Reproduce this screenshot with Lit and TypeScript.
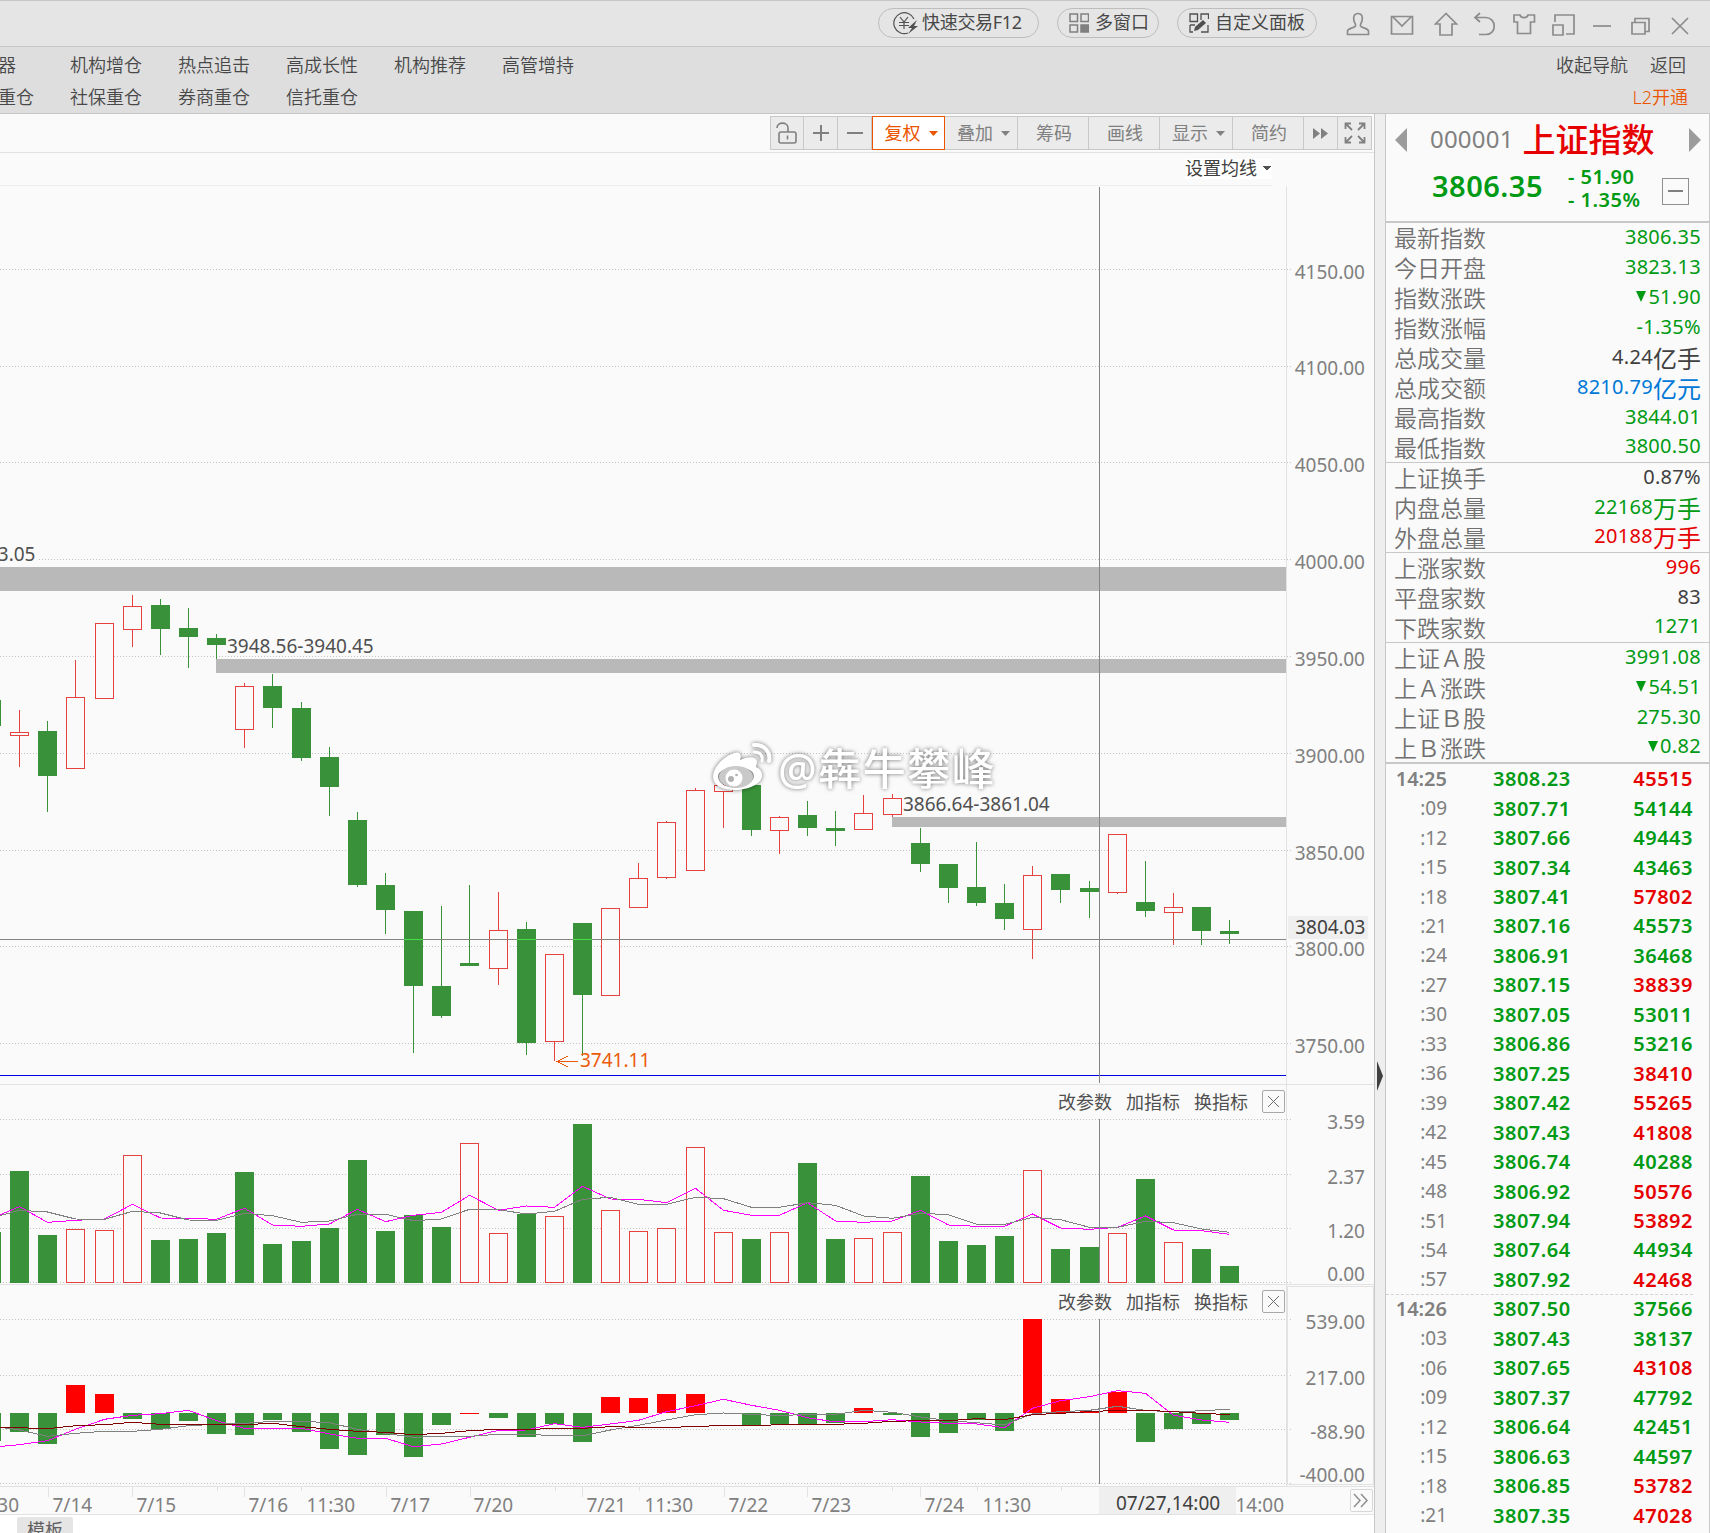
import { html, svg, css, LitElement } from 'lit'
import { customElement } from 'lit/decorators.js'
import { classMap } from 'lit/directives/class-map.js'

const SANS = css`"Noto Sans", "Noto Sans CJK SC", sans-serif`

type Tone = 'up' | 'down' | 'flat' | 'link'

// [tone, high, body top, body bottom, low]
const CANDLES: [string, number, number, number, number][] = [
  ['g', 700, 700, 726, 726],
  ['r', 710, 732, 736, 767],
  ['g', 721, 731, 776, 812],
  ['r', 660, 697, 769, 769],
  ['r', 623, 623, 699, 699],
  ['r', 595, 606, 630, 647],
  ['g', 599, 605, 629, 655],
  ['g', 608, 628, 637, 668],
  ['g', 634, 638, 645, 659],
  ['r', 683, 686, 730, 748],
  ['g', 674, 686, 708, 728],
  ['g', 702, 708, 758, 761],
  ['g', 747, 757, 787, 816],
  ['g', 812, 820, 885, 887],
  ['g', 873, 885, 910, 934],
  ['g', 911, 911, 986, 1053],
  ['g', 906, 986, 1016, 1018],
  ['g', 885, 963, 966, 966],
  ['r', 892, 930, 969, 985],
  ['g', 922, 929, 1043, 1055],
  ['r', 954, 954, 1042, 1061],
  ['g', 923, 923, 995, 1056],
  ['r', 908, 908, 996, 996],
  ['r', 863, 878, 908, 908],
  ['r', 821, 822, 878, 879],
  ['r', 788, 790, 871, 871],
  ['r', 783, 785, 792, 828],
  ['g', 785, 785, 830, 836],
  ['r', 816, 817, 831, 854],
  ['g', 801, 815, 828, 836],
  ['g', 811, 828, 831, 846],
  ['r', 795, 813, 830, 830],
  ['r', 794, 798, 815, 817],
  ['g', 828, 843, 864, 872],
  ['g', 864, 864, 888, 903],
  ['g', 842, 887, 903, 906],
  ['g', 884, 903, 919, 930],
  ['r', 866, 875, 930, 959],
  ['g', 874, 874, 890, 903],
  ['g', 881, 888, 892, 918],
  ['r', 834, 834, 893, 894],
  ['g', 861, 902, 911, 917],
  ['r', 893, 907, 913, 945],
  ['g', 907, 907, 931, 945],
  ['g', 920, 931, 934, 944]
]

const VOLUME_TONES = 'gggrrrggggggggggg' + 'rrgrgrrrrrgrggrrggggrggrgrgg'
const VOLUMES = [
  1232, 1171, 1235, 1229, 1230, 1155, 1240, 1239, 1233, 1172, 1244, 1241, 1228, 1160, 1231, 1215,
  1227, 1143, 1233, 1214, 1216, 1124, 1210, 1231, 1228, 1147, 1232, 1239, 1232, 1163, 1239, 1238,
  1232, 1176, 1241, 1245, 1236, 1170, 1249, 1247, 1233, 1179, 1242, 1249, 1266
]
const VOLUME_FAST = [
  445, 410, 457, 451, 447, 403, 444, 445, 448, 415, 465, 469, 462, 418, 455, 436, 427, 376, 421,
  408, 412, 349, 387, 388, 398, 355, 421, 436, 436, 398, 453, 457, 453, 421, 465, 469, 469, 432,
  474, 478, 472, 438, 480, 482, 493
]
const VOLUME_SLOW = [
  444, 421, 426, 447, 448, 424, 429, 450, 451, 430, 437, 457, 453, 433, 433, 452, 447, 418, 419,
  432, 424, 388, 382, 403, 403, 382, 386, 412, 412, 398, 406, 438, 445, 430, 434, 463, 463, 442,
  449, 472, 472, 454, 458, 477, 487
]

const FLOW_ZERO = 1413
const FLOWS = [
  1441, 1432, 1444, 1385, 1394, 1419, 1429, 1421, 1434, 1435, 1420, 1432, 1449, 1455, 1435, 1457,
  1425, 1412, 1418, 1437, 1424, 1442, 1397, 1398, 1394, 1394, 1413, 1425, 1424, 1424, 1423, 1408,
  1415, 1437, 1433, 1420, 1431, 1319, 1399, 1411, 1392, 1442, 1429, 1424, 1420
]
const FLOW_FAST = [
  1132, 1124, 1112, 1078, 1048, 1036, 1031, 1021, 1052, 1075, 1075, 1075, 1092, 1105, 1105, 1130,
  1122, 1102, 1081, 1080, 1061, 1072, 1062, 1051, 1025, 1007, 988, 1006, 1021, 1043, 1056, 1055,
  1049, 1056, 1060, 1062, 1073, 1015, 992, 980, 962, 970, 1036, 1050, 1057
]
const FLOW_MID = [
  1068, 1080, 1099, 1090, 1084, 1084, 1078, 1067, 1063, 1060, 1054, 1054, 1058, 1078, 1090, 1102,
  1099, 1099, 1093, 1093, 1097, 1097, 1080, 1066, 1050, 1034, 1029, 1033, 1037, 1033, 1033, 1021,
  1027, 1041, 1052, 1058, 1065, 1031, 1025, 1021, 1009, 1021, 1026, 1022, 1018
]
const FLOW_SLOW = [
  1072, 1073, 1076, 1067, 1064, 1057, 1063, 1064, 1064, 1064, 1060, 1070, 1078, 1084, 1087, 1094,
  1090, 1082, 1078, 1079, 1075, 1075, 1070, 1072, 1073, 1069, 1067, 1067, 1064, 1063, 1063, 1060,
  1054, 1052, 1052, 1046, 1049, 1034, 1030, 1025, 1021, 1021, 1025, 1030, 1034
]

// the series start one bar left of the visible area
const barX = (index: number) => {
  const i = index - 1
  return 19 + 28 * i + Math.floor((i + 4) / 7)
}
const points = (series: number[]) =>
  series.map((v, i) => `${barX(i) + 0.5},${(1070 + v / 3).toFixed(1)}`).join(' ')

const hollow = (x: number, top: number, bottom: number) =>
  svg`<rect class="hollow" x=${x - 8.5} y=${top + 0.5} width="18" height=${Math.max(bottom - top - 1, 1)} />`
const solid = (x: number, top: number, bottom: number, tone = 'solid') =>
  svg`<rect class=${tone} x=${x - 9} y=${top} width="19" height=${bottom - top} />`
const grid = (ys: number[]) =>
  ys.map((y) => svg`<line class="grid" x1="0" x2="1291" y1=${y + 0.5} y2=${y + 0.5} />`)
const scale = (labels: [number, string][]) =>
  labels.map(([y, text]) => svg`<text class="scale" x="1365" y=${y}>${text}</text>`)

@customElement('kline-chart')
export class KlineChart extends LitElement {
  static styles = css`
  :host {
    display: flex;
    flex-direction: column;
    background: #fafafa;
    font: 19px/1 ${SANS};
  }

  .settings {
    box-sizing: border-box;
    height: 33px;
    display: flex;
    border-bottom: 1px solid #efefef;
    width: 1272px;
    justify-content: flex-end;
    align-items: center;
    font-size: 18px;
    color: #404040;
  }

  .settings span {
    display: flex;
    align-items: center;
    gap: 6px;
    padding: 0 1px 2px 0;
    background: #fff;
  }

  .pane {
    position: relative;
    display: flex;
  }

  svg {
    display: block;
    shape-rendering: crispEdges;
  }

  .grid { stroke: #c4c4c4; stroke-dasharray: 1 2; }
  .edge { stroke: #e2e2e2; }
  .gap { fill: #b9b9b9; }
  .hollow { fill: #fafafa; stroke: #e64141; }
  .wick-r { fill: #e64141; }
  .wick-g, .solid { fill: #399239; }
  .flow-in { fill: #f00; }
  .cross { stroke: #848484; }
  .cross-bright { stroke: #4adf4a; }
  .base { stroke: #0000e0; }
  .fast, .slow, .trend { fill: none; }
  .fast { stroke: #f0f; }
  .slow { stroke: #808080; }
  .trend { stroke: #800000; }
  .low { fill: none; stroke: #eb5a0a; }
  .tag { fill: #efefef; }
  text { fill: #505050; }
  .scale { fill: #808080; text-anchor: end; }
  .date { fill: #808080; }
  .dark { fill: #404040; }
  .orange { fill: #eb5a0a; }
  .end { text-anchor: end; }

  .mark {
    fill: #fff;
    font-size: 43px;
    font-weight: 500;
    letter-spacing: 1.5px;
    shape-rendering: auto;
    filter: drop-shadow(0 0 2px rgba(0, 0, 0, 0.55));
  }

  .mark text { fill: #fff; }
  .mark .arc { fill: none; stroke: #fff; stroke-linecap: round; }

  .tools {
    position: absolute;
    top: 5px;
    right: 89px;
    display: flex;
    align-items: center;
    gap: 14px;
    font-size: 18px;
    color: #505050;
  }

  .tools i {
    box-sizing: border-box;
    width: 23px;
    height: 23px;
    border: 1px solid #a8a8a8;
    border-radius: 2px;
    display: grid;
    place-items: center;
  }

  .tools path { stroke: #707070; fill: none; shape-rendering: auto; }
  .more { fill: #fafafa; stroke: #d8d8d8; }
  .chevron { fill: none; stroke: #909090; stroke-width: 1.5; shape-rendering: auto; }
  `

  renderTools () {
    return html`
    <div class="tools">
      <span>改参数</span><span>加指标</span><span>换指标</span>
      <i><svg width="13" height="13"><path d="M1 1L12 12M12 1L1 12" /></svg></i>
    </div>
    `
  }

  renderPrice () {
    return svg`
    <svg width="1374" height="899" viewBox="0 186 1374 899">
      ${grid([269, 366, 462, 559, 656, 753, 850, 946, 1043])}
      <rect fill="#fafafa" x="0" y="545" width="39" height="18" />
      <rect class="gap" x="0" y="567" width="1286" height="24" />
      <rect class="gap" x="216" y="659" width="1070" height="14" />
      <rect class="gap" x="892" y="817" width="394" height="10" />
      <line class="edge" x1="1286.5" x2="1286.5" y1="186" y2="1085" />
      <line class="edge" x1="0" x2="1374" y1="1084.5" y2="1084.5" />
      <line class="base" x1="0" x2="1286" y1="1075.5" y2="1075.5" />
      ${CANDLES.map(([tone, high, top, bottom, low], i) => {
        const x = barX(i)
        return svg`
        <rect class=${'wick-' + tone} x=${x} y=${high} width="1" height=${low - high} />
        ${tone === 'r' ? hollow(x, top, bottom) : solid(x, top, bottom)}`
      })}
      <line class="cross" x1="0" x2="1286" y1="939.5" y2="939.5" />
      ${CANDLES.map(([tone, , top, bottom], i) => tone === 'g' && top < 939 && bottom > 939
        ? svg`<line class="cross-bright" x1=${barX(i) - 9} x2=${barX(i) + 10} y1="939.5" y2="939.5" />`
        : '')}
      <line class="cross" x1="1099.5" x2="1099.5" y1="187" y2="1083" />
      <text class="end" x="35.5" y="561">3.05</text>
      <text x="227" y="653">3948.56-3940.45</text>
      <text x="903" y="811">3866.64-3861.04</text>
      <path class="low" d="M557 1061.5H578M568 1056L557 1061.5L568 1067" />
      <text class="orange" x="580" y="1067">3741.11</text>
      <rect class="tag" x="1288" y="916" width="80" height="23" />
      ${scale([[279, '4150.00'], [375, '4100.00'], [472, '4050.00'], [569, '4000.00'], [666, '3950.00'],
        [763, '3900.00'], [860, '3850.00'], [956, '3800.00'], [1053, '3750.00']])}
      <text class="dark end" x="1365.5" y="934">3804.03</text>
      <g class="mark">
        <path fill-rule="evenodd" d="M713 777C713 767 724 756 734 753C740 751 742 755 740 760C746 757 753 756 756 759C758 761 756 765 756 767C763 770 764 777 759 782C748 793 714 794 713 777ZM718 777C719 785 729 789 740 787C751 785 756 778 753 773C750 765 717 765 718 777Z" />
        <ellipse fill="#c9c9c9" cx="736" cy="777" rx="17" ry="11" />
        <circle cx="734" cy="778" r="8.5" />
        <circle fill="#b0b0b0" cx="731" cy="779" r="3" />
        <circle fill="#b0b0b0" cx="736.5" cy="775" r="1.3" />
        <path class="arc" stroke-width="4" d="M754 745C764 744 771 752 769 761" />
        <path class="arc" stroke-width="3" d="M754 752C760 752 763 755 762 761" />
        <text x="778" y="785">@犇牛攀峰</text>
      </g>
    </svg>
    `
  }

  renderVolume () {
    return svg`
    <svg width="1374" height="200" viewBox="0 1085 1374 200">
      ${grid([1119, 1174, 1228, 1282])}
      <line class="edge" x1="1286.5" x2="1286.5" y1="1085" y2="1285" />
      <line class="edge" x1="0" x2="1374" y1="1284.5" y2="1284.5" />
      ${VOLUMES.map((y, i) => VOLUME_TONES[i] === 'r' ? hollow(barX(i), y, 1283) : solid(barX(i), y, 1283))}
      <polyline class="fast" points=${points(VOLUME_FAST)} />
      <polyline class="slow" points=${points(VOLUME_SLOW)} />
      <line class="cross" x1="1099.5" x2="1099.5" y1="1119" y2="1283" />
      ${scale([[1129, '3.59'], [1184, '2.37'], [1238, '1.20'], [1281, '0.00']])}
    </svg>
    `
  }

  renderFlow () {
    return svg`
    <svg width="1374" height="201" viewBox="0 1285 1374 201">
      ${grid([1319, 1375, 1429, 1483])}
      <rect class="edge" fill="none" x="1287.5" y="1286.5" width="86" height="198" />
      <line class="edge" x1="1286.5" x2="1286.5" y1="1285" y2="1486" />
      ${FLOWS.map((y, i) => y > FLOW_ZERO
        ? solid(barX(i), FLOW_ZERO, y)
        : solid(barX(i), y === 1412 ? FLOW_ZERO : y, y === 1412 ? 1414 : FLOW_ZERO, 'flow-in'))}
      <polyline class="fast" points=${points(FLOW_FAST)} />
      <polyline class="slow" points=${points(FLOW_MID)} />
      <polyline class="trend" points=${points(FLOW_SLOW)} />
      <line class="cross" x1="1099.5" x2="1099.5" y1="1319" y2="1484" />
      ${scale([[1329, '539.00'], [1385, '217.00'], [1439, '-88.90'], [1482, '-400.00']])}
    </svg>
    `
  }

  renderTime () {
    const long = [48, 132, 244, 386, 470, 582, 724, 807, 920]
    const short = [217, 301, 555, 639, 892, 977, 1061, 1146, 1230]
    const dates: [number, string][] = [[-29, '11:30'], [53, '7/14'], [137, '7/15'], [249, '7/16'],
      [307, '11:30'], [391, '7/17'], [474, '7/20'], [587, '7/21'], [645, '11:30'], [729, '7/22'],
      [812, '7/23'], [925, '7/24'], [983, '11:30'], [1236, '14:00']]
    return svg`
    <svg width="1374" height="29" viewBox="0 1486 1374 29">
      <line class="edge" x1="0" x2="1374" y1="1486.5" y2="1486.5" />
      <line class="edge" x1="0" x2="1374" y1="1514.5" y2="1514.5" />
      ${long.map((x) => svg`<line class="edge" x1=${x + 0.5} x2=${x + 0.5} y1="1486" y2="1497" />`)}
      ${short.map((x) => svg`<line class="edge" x1=${x + 0.5} x2=${x + 0.5} y1="1486" y2="1491" />`)}
      <rect class="tag" x="1099" y="1487" width="137" height="27" />
      ${dates.map(([x, text]) => svg`<text class="date" x=${x - 0.5} y="1512">${text}</text>`)}
      <text class="dark" x="1116" y="1510">07/27,14:00</text>
      <rect class="more" x="1350.5" y="1489.5" width="22" height="22" rx="2" />
      <path class="chevron" d="M1354 1494L1360 1500.500L1354 1507M1361 1494L1367 1500.500L1361 1507" />
    </svg>
    `
  }

  render () {
    return html`
    <div class="settings">
      <span>设置均线 <svg width="8" height="5"><path fill="#505050" d="M0 0H8L4 5Z" /></svg></span>
    </div>
    <div class="pane">${this.renderPrice()}</div>
    <div class="pane">${this.renderVolume()}${this.renderTools()}</div>
    <div class="pane">${this.renderFlow()}${this.renderTools()}</div>
    <div class="pane">${this.renderTime()}</div>
    `
  }
}

const GROUPS: [string, string, Tone][][] = [
  [
    ['最新指数', '3806.35', 'down'],
    ['今日开盘', '3823.13', 'down'],
    ['指数涨跌', '▼51.90', 'down'],
    ['指数涨幅', '-1.35%', 'down'],
    ['总成交量', '4.24亿手', 'flat'],
    ['总成交额', '8210.79亿元', 'link'],
    ['最高指数', '3844.01', 'down'],
    ['最低指数', '3800.50', 'down']
  ],
  [
    ['上证换手', '0.87%', 'flat'],
    ['内盘总量', '22168万手', 'down'],
    ['外盘总量', '20188万手', 'up']
  ],
  [
    ['上涨家数', '996', 'up'],
    ['平盘家数', '83', 'flat'],
    ['下跌家数', '1271', 'down']
  ],
  [
    ['上证Ａ股', '3991.08', 'down'],
    ['上Ａ涨跌', '▼54.51', 'down'],
    ['上证Ｂ股', '275.30', 'down'],
    ['上Ｂ涨跌', '▼0.82', 'down']
  ]
]

const TICKS: [string, string, string, Tone][] = [
  ['14:25', '3808.23', '45515', 'up'],
  [':09', '3807.71', '54144', 'down'],
  [':12', '3807.66', '49443', 'down'],
  [':15', '3807.34', '43463', 'down'],
  [':18', '3807.41', '57802', 'up'],
  [':21', '3807.16', '45573', 'down'],
  [':24', '3806.91', '36468', 'down'],
  [':27', '3807.15', '38839', 'up'],
  [':30', '3807.05', '53011', 'down'],
  [':33', '3806.86', '53216', 'down'],
  [':36', '3807.25', '38410', 'up'],
  [':39', '3807.42', '55265', 'up'],
  [':42', '3807.43', '41808', 'up'],
  [':45', '3806.74', '40288', 'down'],
  [':48', '3806.92', '50576', 'up'],
  [':51', '3807.94', '53892', 'up'],
  [':54', '3807.64', '44934', 'down'],
  [':57', '3807.92', '42468', 'up'],
  ['14:26', '3807.50', '37566', 'down'],
  [':03', '3807.43', '38137', 'down'],
  [':06', '3807.65', '43108', 'up'],
  [':09', '3807.37', '47792', 'down'],
  [':12', '3806.64', '42451', 'down'],
  [':15', '3806.63', '44597', 'down'],
  [':18', '3806.85', '53782', 'up'],
  [':21', '3807.35', '47028', 'up']
]

@customElement('quote-panel')
export class QuotePanel extends LitElement {
  static styles = css`
  :host {
    display: flex;
    flex-direction: column;
    background: #fafafa;
    font: 20px/1 ${SANS};
    color: #404040;
    overflow: hidden;
  }

  .up { color: #e60000; }
  .down { color: #009a14; }
  .link { color: #0078d7; }

  header {
    box-sizing: border-box;
    height: 109px;
    border-bottom: 2px solid #c8c8c8;
    display: flex;
    flex-direction: column;
    padding: 0 8px 0 9px;
  }

  .name {
    height: 50px;
    display: flex;
    align-items: center;
    color: #808080;
    font-size: 24px;
  }

  .name svg { flex: none; fill: #9c9c9c; margin-top: 2px; }
  .name .code { margin: 0 9px 0 23px; letter-spacing: 0.2px; }
  .name strong { flex: 1; font-size: 33px; font-weight: 500; color: #e60000; }

  .last {
    display: flex;
    align-items: center;
    padding: 0 12px 0 37px;
    font-weight: 600;
    margin-top: 1px;
  }

  .last b { font-size: 29px; font-weight: 600; width: 136px; letter-spacing: 0.5px; margin-top: -5px; }
  .last p { flex: 1; margin: 0; line-height: 23px; white-space: pre; letter-spacing: 0.5px; }

  .last i {
    box-sizing: border-box;
    width: 27px;
    height: 27px;
    margin-top: 6px;
    border: 1.500px solid #909090;
    display: grid;
    place-items: center;
  }

  .last i::after {
    content: "";
    width: 15px;
    height: 2px;
    background: #808080;
  }

  dl {
    box-sizing: border-box;
    margin: 0;
    border-bottom: 1px solid #c8c8c8;
    padding: 0 8px 0 8px;
  }

  dl:last-of-type { border-bottom-width: 2px; }

  dl div {
    height: 30px;
    display: flex;
    justify-content: space-between;
    align-items: center;
  }

  dl div:last-child { height: 29px; }
  dt { font-size: 23px; font-weight: 350; color: #707070; padding-top: 1px; }
  dd { margin: 0 0 3px; display: flex; align-items: center; letter-spacing: 0.3px; }
  dd span { font-size: 24px; letter-spacing: 0; margin-top: 4px; }
  dd svg { fill: currentColor; margin-right: 2px; }

  ol {
    margin: 0;
    padding: 0 16px 0 0;
    list-style: none;
  }

  li {
    height: 29.460px;
    display: grid;
    grid-template-columns: 61px 46px 1fr auto;
    align-items: center;
    font-weight: 650;
    letter-spacing: 0.5px;
    padding-top: 1px;
    box-sizing: border-box;
  }

  li time { text-align: right; color: #808080; font-weight: 400; font-size: 19px; letter-spacing: 0; }
  li b { grid-column: 3; font-weight: inherit; }
  li.minute time { font-weight: 650; font-size: 20px; }
  li.minute:not(:first-child) { border-top: 1px dashed #d4d4d4; padding-top: 0; }
  `

  renderValue (value: string) {
    const arrow = value.startsWith('▼')
    const [, digits, unit] = value.match(/^▼?([-\d.%]+)(.*)$/)!
    return html`${arrow ? html`<svg width="10" height="11"><path d="M0 0H10L5 11Z" /></svg>` : ''}${digits}${unit ? html`<span>${unit}</span>` : ''}`
  }

  render () {
    return html`
    <header>
      <div class="name">
        <svg width="12" height="24"><path d="M12 0V24L0 12Z" /></svg>
        <span class="code">000001</span>
        <strong>上证指数</strong>
        <svg width="12" height="24"><path d="M0 0V24L12 12Z" /></svg>
      </div>
      <div class="last down">
        <b>3806.35</b>
        <p>- 51.90
- 1.35%</p>
        <i></i>
      </div>
    </header>
    ${GROUPS.map((rows) => html`
    <dl>
      ${rows.map(([label, value, tone]) => html`<div><dt>${label}</dt><dd class=${tone}>${this.renderValue(value)}</dd></div>`)}
    </dl>`)}
    <ol>
      ${TICKS.map(([time, price, lots, tone]) => html`
      <li class=${classMap({ minute: time.length > 3 })}>
        <time>${time}</time><b class="down">${price}</b><span class=${tone}>${lots}</span>
      </li>`)}
    </ol>
    `
  }
}

const WINDOW_ICONS = [
  svg`<path d="M12 1.500C8 1.500 7 5 8 9C8.500 11 10 12 9.500 14C9 16 2 16 1.500 19V22.500H22.500V19C22 16 15 16 14.500 14C14 12 15.500 11 16 9C17 5 16 1.500 12 1.500Z" />`,
  svg`<path d="M1.500 4.500H22.500V22H1.500ZM3 5L12 14L21 5" />`,
  svg`<path d="M12 1.500L1.500 12H6V23H18V12H22.500Z" />`,
  svg`<path d="M7 1L2 5.500L7 10M2 5.500H13C24 6 24 22.500 13 22.500H6" />`,
  svg`<path d="M2 3H8C9 6.500 15 6.500 16 3H22.500V10H18.500V21.500H5.500V10H2Z" />`,
  svg`<path d="M4 10V3H23V22H15M2 13H12V23H2Z" />`,
  svg`<path d="M3 14H21" />`,
  svg`<path d="M3 10.500H16V22H3ZM6 10V6.500H20V19.500H16" />`,
  svg`<path d="M4 6L20 22M20 6L4 22" />`
]

const NAV = [
  ['器', '重仓'],
  ['机构增仓', '社保重仓'],
  ['热点追击', '券商重仓'],
  ['高成长性', '信托重仓'],
  ['机构推荐'],
  ['高管增持']
]

const TOOLBAR: [string, boolean][] = [
  ['复权', true], ['叠加', true], ['筹码', false], ['画线', false], ['显示', true], ['简约', false]
]

@customElement('app-root')
export class AppRoot extends LitElement {
  static styles = css`
  :host {
    display: flex;
    flex-direction: column;
    width: 1710px;
    height: 1533px;
    overflow: hidden;
    background: #fff;
    font: 18px/1 ${SANS};
    color: #484848;
  }

  svg { display: block; fill: none; }

  .title {
    box-sizing: border-box;
    height: 47px;
    flex: none;
    display: flex;
    justify-content: flex-end;
    padding: 7px 18px 0 0;
    border: solid #c6c6c6;
    border-width: 1px 0;
    background: #e5e5e5;
  }

  .pill {
    box-sizing: border-box;
    height: 30px;
    border: 1px solid #bdbdbd;
    border-radius: 15px;
    display: flex;
    align-items: center;
    gap: 6px;
    margin-right: 18px;
    padding-left: 11px;
  }

  .pill span { padding-bottom: 2px; white-space: nowrap; }

  .quick { width: 161px; padding-left: 14px; gap: 3px; letter-spacing: -0.3px; }
  .multi { width: 102px; }
  .custom { width: 140px; margin-right: 29px; }

  .window { display: flex; gap: 15px; padding-top: 4px; }
  .window svg { stroke: #8c8c8c; stroke-width: 1.700; }
  .window svg:nth-child(-n+2) { margin-right: 5px; }

  nav {
    box-sizing: border-box;
    height: 67px;
    flex: none;
    display: flex;
    justify-content: space-between;
    padding: 2px 22px 0 0;
    background: #dedede;
    border-bottom: 1px solid #c6c6c6;
    line-height: 32px;
    font-weight: 350;
  }

  .menu { display: flex; margin-left: -2px; }
  .menu div { width: 108px; }
  .menu div:first-child { width: 72px; }
  .account { text-align: right; }
  .account div { display: flex; gap: 22px; padding-right: 2px; }
  .account a { color: #eb5500; }

  main {
    flex: 1;
    min-height: 0;
    display: grid;
    grid-template-columns: 1374px 12px 323px 1px;
  }

  .toolbar {
    box-sizing: border-box;
    height: 39px;
    display: flex;
    justify-content: flex-end;
    padding: 2px 2px 0 0;
    border-bottom: 1px solid #e2e2e2;
    background: #fafafa;
  }

  .toolbar > * {
    box-sizing: border-box;
    height: 34px;
    width: 34px;
    border: solid #c8c8c8;
    border-width: 1px 1px 1px 0;
    background: #ebebeb;
    color: #808080;
    display: flex;
    gap: 8px;
    align-items: center;
    justify-content: center;
  }

  .toolbar > :first-child { border-left-width: 1px; }
  .toolbar > b { width: 71px; font-weight: 400; padding-left: 2px; }
  .toolbar > .drop { width: 73px; padding-left: 5px; }

  .toolbar > .on {
    border: 1px solid #eb5500;
    background: #fff;
    color: #eb5500;
  }

  .caret { fill: currentColor; }

  .gutter {
    box-sizing: border-box;
    border: solid #c8c8c8;
    border-width: 0 1px;
    background: #eee;
    display: flex;
    align-items: center;
    padding: 502px 0 0 2px;
  }

  .rim { background: #c8c8c8; }

  .tabs { padding-left: 17px; padding-top: 2px; background: #fff; height: 18px; overflow: hidden; }
  .tabs span { display: block; width: 56px; height: 26px; line-height: 26px; border-radius: 2px; background: #e5e5e5; text-align: center; color: #606060; }
  `

  render () {
    return html`
    <div class="title">
      <div class="pill quick">
        <svg width="26" height="24" viewBox="0 0 26 24" stroke="#505050" stroke-width="1.200">
          <path d="M15 22A10.500 10.500 0 1 1 21 8M7 6L11 11L15 6M6 11.500H16M6 14.500H16M11 11V18" />
          <path fill="#505050" stroke="none" d="M24 9L15 17H19L15 23L25 15H21Z" />
        </svg>
        <span>快速交易F12</span>
      </div>
      <div class="pill multi">
        <svg width="20" height="20" stroke="#808080" stroke-width="1.500">
          <path d="M1 1H8.500V8.500H1ZM12 1H19.500V8.500H12ZM1 12H8.500V19H1Z" />
          <path fill="#808080" d="M12 12H19.500V19H12Z" />
        </svg>
        <span>多窗口</span>
      </div>
      <div class="pill custom">
        <svg width="20" height="20" stroke="#505050" stroke-width="1.300">
          <path d="M1 1H8.500V8.500H1ZM12 7V1H19.500V6M1 12V19H4M12 19H19V12M6 12H1" />
          <path fill="#505050" stroke="none" d="M5 18L6 14L14 7L17 10L9 17Z" />
        </svg>
        <span>自定义面板</span>
      </div>
      <div class="window">
        ${WINDOW_ICONS.map((icon) => html`<svg width="24" height="24">${icon}</svg>`)}
      </div>
    </div>
    <nav>
      <div class="menu">
        ${NAV.map((column) => html`<div>${column.map((item) => html`${item}<br>`)}</div>`)}
      </div>
      <div class="account">
        <div><span>收起导航</span><span>返回</span></div>
        <a>L2开通</a>
      </div>
    </nav>
    <main>
      <section>
        <div class="toolbar">
          <i><svg width="22" height="22" stroke="#808080" stroke-width="1.600"><rect x="3" y="10" width="17" height="11" rx="2" /><path d="M1 6C1 -0.500 12 -0.500 12 6V10M11.500 13.500V17.500" /></svg></i>
          <i><svg width="18" height="18" stroke="#808080" stroke-width="2"><path d="M1 9H17M9 1V17" /></svg></i>
          <i><svg width="18" height="18" stroke="#808080" stroke-width="2"><path d="M1 9H17" /></svg></i>
          ${TOOLBAR.map(([label, drop], i) => html`
          <b class=${classMap({ drop, on: i === 0 })}>${label}${drop ? html`<svg class="caret" width="9" height="5"><path d="M0 0H9L4.500 5Z" /></svg>` : ''}</b>`)}
          <i><svg class="caret" width="15" height="11"><path d="M0 0L7 5.500L0 11ZM8 0L15 5.500L8 11Z" /></svg></i>
          <i><svg width="22" height="22" stroke="#808080" stroke-width="1.800"><path d="M1.500 7V1.500H7M1.500 1.500L8 8M15 1.500H20.500V7M20.500 1.500L14 8M1.500 15V20.500H7M1.500 20.500L8 14M15 20.500H20.500V15M20.500 20.500L14 14" /></svg></i>
        </div>
        <kline-chart></kline-chart>
        <div class="tabs"><span>模板</span></div>
      </section>
      <div class="gutter"><svg width="6" height="30"><path fill="#404040" d="M0 0L6 15L0 30Z" /></svg></div>
      <quote-panel></quote-panel>
      <div class="rim"></div>
    </main>
    `
  }
}
